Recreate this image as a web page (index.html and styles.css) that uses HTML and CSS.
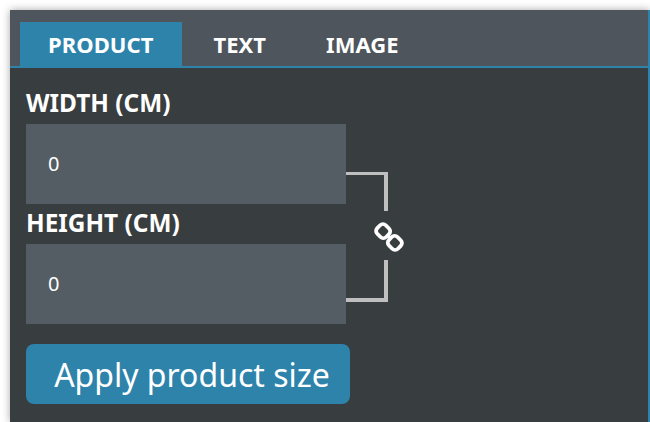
FILE: index.html
```html
<!DOCTYPE html>
<html lang="en">
<head>
    <meta charset="UTF-8">
    <title>Product size</title>
    <link rel="stylesheet" href="styles.css">
</head>
<body>
    <div class="panel">
        <nav class="tabs">
            <button class="tab active">PRODUCT</button>
            <button class="tab">TEXT</button>
            <button class="tab">IMAGE</button>
        </nav>

        <div class="content">
            <div class="size-row">
                <div class="fields">
                    <label class="field-label">WIDTH (CM)</label>
                    <input class="field-input" type="text" value="0">
                    <label class="field-label">HEIGHT (CM)</label>
                    <input class="field-input" type="text" value="0">
                </div>
                <div class="link">
                    <div class="bracket bracket-top"></div>
                    <svg class="link-icon" width="36" height="36" viewBox="0 0 36 36">
                        <g fill="none" stroke="#fff" stroke-width="3.8" transform="rotate(45 18 18)">
                            <rect x="3.4" y="12" width="12.6" height="12" rx="4"/>
                            <rect x="20" y="12" width="12.6" height="12" rx="4"/>
                            <path d="M15 18h6" stroke-width="3.4"/>
                        </g>
                    </svg>
                    <div class="bracket bracket-bottom"></div>
                </div>
            </div>
            <button class="apply-btn">Apply product size</button>
        </div>
    </div>
</body>
</html>
```

FILE: styles.css
```css
* {
    box-sizing: border-box;
    margin: 0;
    padding: 0;
}

body {
    font-family: "Noto Sans", sans-serif;
    background: #fff;
    height: 422px;
    overflow: hidden;
    padding: 10px 0 0 10px;
}

.panel {
    width: 640px;
    height: 412px;
    background: #383d40;
    border-right: 2px solid #2e83ab;
    box-shadow: 0 0 8px rgba(0, 0, 0, 0.35);
}

.tabs {
    display: flex;
    gap: 4px;
    height: 58px;
    padding: 12px 0 0 10px;
    background: #4e555c;
    border-bottom: 2px solid #2e83ab;
}

.tab {
    background: none;
    border: none;
    color: #fff;
    font: bold 22px "Noto Sans", sans-serif;
    letter-spacing: 0.05px;
    padding: 0 28px;
    height: 44px;
}

.tab.active {
    background: #2e83ab;
    padding-right: 28.5px;
    margin-right: -0.5px;
}

.content {
    padding: 16px 0 0 16px;
}

.size-row {
    display: flex;
}

.fields {
    width: 320px;
}

.field-label {
    display: block;
    color: #fff;
    font-weight: bold;
    font-size: 24.4px;
    line-height: 38px;
    height: 40px;
}

.field-input {
    display: block;
    width: 320px;
    height: 80px;
    padding: 0 0 2px 22px;
    background: #535d63;
    border: none;
    color: #fff;
    font: 20px "Noto Sans", sans-serif;
}

.link {
    display: flex;
    flex-direction: column;
    width: 60px;
    padding-top: 88px;
}

.bracket {
    width: 42px;
    height: 39px;
    border-right: 4px solid #bfbfbf;
}

.bracket-top {
    border-top: 3px solid #bfbfbf;
}

.bracket-bottom {
    height: 42px;
    border-bottom: 4px solid #bfbfbf;
}

.link-icon {
    display: block;
    margin: 8px 0 5px 25px;
}

.apply-btn {
    display: block;
    width: 324px;
    height: 60px;
    margin-top: 20px;
    padding-left: 8px;
    background: #2e83ab;
    border: none;
    border-radius: 8px;
    color: #fff;
    font: 32px "Noto Sans", sans-serif;
}
```
